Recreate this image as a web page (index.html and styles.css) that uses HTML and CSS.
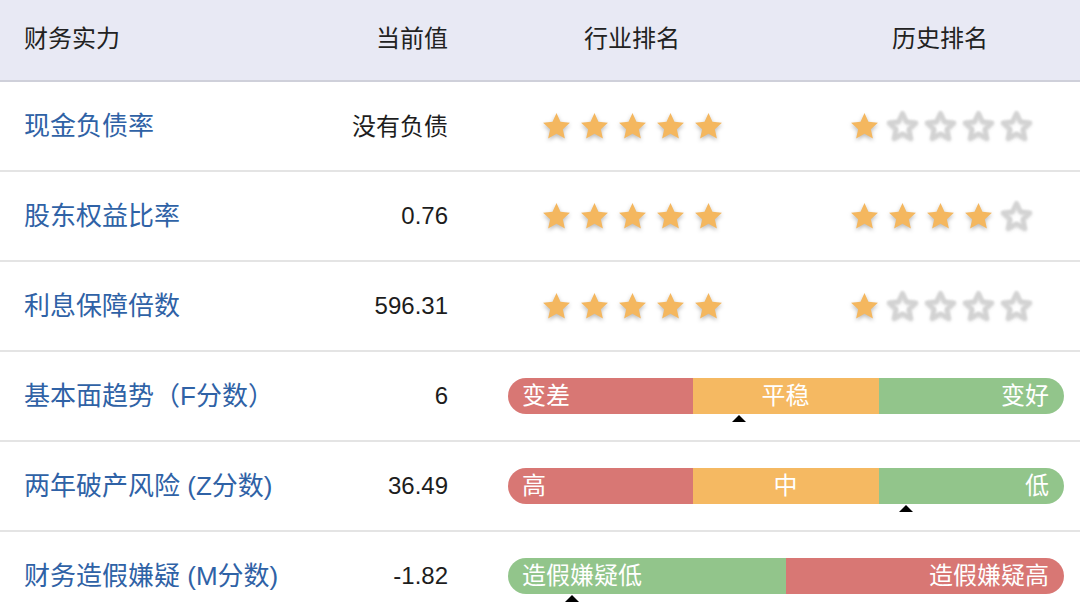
FILE: index.html
```html
<!DOCTYPE html>
<html lang="zh-CN">
<head>
<meta charset="utf-8">
<title>财务实力</title>
<link rel="stylesheet" href="styles.css">
</head>
<body>
<svg width="0" height="0" class="defs">
  <defs>
    <symbol id="star" viewBox="0 0 24 24">
      <path d="M12 1.6l3.05 6.75 7.35.75-5.5 4.95 1.6 7.25L12 17.55 5.5 21.3l1.6-7.25-5.5-4.95 7.35-.75z"/>
    </symbol>
  </defs>
</svg>
<div class="table">
  <div class="row head">
    <div class="c1">财务实力</div>
    <div class="c2">当前值</div>
    <div class="c3">行业排名</div>
    <div class="c4">历史排名</div>
  </div>

  <div class="row">
    <div class="c1 label">现金负债率</div>
    <div class="c2 val cjk">没有负债</div>
    <div class="c3 stars">
      <svg class="st on"><use href="#star"/></svg><svg class="st on"><use href="#star"/></svg><svg class="st on"><use href="#star"/></svg><svg class="st on"><use href="#star"/></svg><svg class="st on"><use href="#star"/></svg>
    </div>
    <div class="c4 stars">
      <svg class="st on"><use href="#star"/></svg><svg class="st off"><use href="#star"/></svg><svg class="st off"><use href="#star"/></svg><svg class="st off"><use href="#star"/></svg><svg class="st off"><use href="#star"/></svg>
    </div>
  </div>

  <div class="row">
    <div class="c1 label">股东权益比率</div>
    <div class="c2 val">0.76</div>
    <div class="c3 stars">
      <svg class="st on"><use href="#star"/></svg><svg class="st on"><use href="#star"/></svg><svg class="st on"><use href="#star"/></svg><svg class="st on"><use href="#star"/></svg><svg class="st on"><use href="#star"/></svg>
    </div>
    <div class="c4 stars">
      <svg class="st on"><use href="#star"/></svg><svg class="st on"><use href="#star"/></svg><svg class="st on"><use href="#star"/></svg><svg class="st on"><use href="#star"/></svg><svg class="st off"><use href="#star"/></svg>
    </div>
  </div>

  <div class="row">
    <div class="c1 label">利息保障倍数</div>
    <div class="c2 val">596.31</div>
    <div class="c3 stars">
      <svg class="st on"><use href="#star"/></svg><svg class="st on"><use href="#star"/></svg><svg class="st on"><use href="#star"/></svg><svg class="st on"><use href="#star"/></svg><svg class="st on"><use href="#star"/></svg>
    </div>
    <div class="c4 stars">
      <svg class="st on"><use href="#star"/></svg><svg class="st off"><use href="#star"/></svg><svg class="st off"><use href="#star"/></svg><svg class="st off"><use href="#star"/></svg><svg class="st off"><use href="#star"/></svg>
    </div>
  </div>

  <div class="row">
    <div class="c1 label">基本面趋势（F分数）</div>
    <div class="c2 val">6</div>
    <div class="bar three">
      <div class="seg red left">变差</div>
      <div class="seg orange center">平稳</div>
      <div class="seg green right">变好</div>
      <span class="ptr" style="left:41.5%"></span>
    </div>
  </div>

  <div class="row">
    <div class="c1 label">两年破产风险 (Z分数)</div>
    <div class="c2 val">36.49</div>
    <div class="bar three">
      <div class="seg red left">高</div>
      <div class="seg orange center">中</div>
      <div class="seg green right">低</div>
      <span class="ptr" style="left:71.6%"></span>
    </div>
  </div>

  <div class="row">
    <div class="c1 label">财务造假嫌疑 (M分数)</div>
    <div class="c2 val">-1.82</div>
    <div class="bar two">
      <div class="seg green left">造假嫌疑低</div>
      <div class="seg red right">造假嫌疑高</div>
      <span class="ptr" style="left:11.5%"></span>
    </div>
  </div>
</div>
</body>
</html>
```

FILE: styles.css
```css
html, body {
  margin: 0;
  padding: 0;
  background: #ffffff;
  overflow: hidden;
}
body {
  width: 1080px;
  height: 612px;
  font-family: "Liberation Sans", "Noto Sans CJK SC", sans-serif;
  color: #1d1d1d;
}
.defs {
  position: absolute;
  width: 0;
  height: 0;
}
.table {
  display: flex;
  flex-direction: column;
}
.row {
  display: grid;
  grid-template-columns: minmax(0, 1fr) 120px 248px 248px;
  column-gap: 60px;
  align-items: center;
  padding: 0 16px 0 24px;
  height: 88px;
  border-bottom: 2px solid #e4e4e4;
}
.row.head {
  height: 72px;
  padding-bottom: 8px;
  background: #e8e9f4;
  border-bottom: 2px solid #cfd0da;
  font-size: 24px;
  color: #222222;
}
.c1 {
  white-space: nowrap;
}
.c2 {
  text-align: right;
  white-space: nowrap;
}
.c3, .c4 {
  text-align: center;
}
.label {
  font-size: 26px;
  color: #2f62a6;
  padding-bottom: 5px;
}
.val {
  font-size: 24px;
  color: #1d1d1d;
}
.val.cjk {
  padding-bottom: 4px;
}
.stars {
  display: flex;
  justify-content: center;
  gap: 7px;
}
.st {
  width: 31px;
  height: 31px;
}
.st.on {
  fill: #f4b75f;
  filter: drop-shadow(0 2px 2px rgba(0, 0, 0, 0.28));
}
.st.off {
  fill: none;
  stroke: #d2d2d2;
  stroke-width: 3;
  stroke-linejoin: round;
  filter: blur(0.8px) drop-shadow(0 1px 1.5px rgba(0, 0, 0, 0.15));
}
.bar {
  grid-column: 3 / 5;
  position: relative;
  display: grid;
  height: 36px;
  border-radius: 18px;
  color: #ffffff;
  font-size: 24px;
  font-family: "Noto Sans CJK SC", sans-serif;
}
.bar.three {
  grid-template-columns: 1fr 1fr 1fr;
}
.bar.two {
  grid-template-columns: 1fr 1fr;
}
.seg {
  display: flex;
  align-items: center;
  padding: 0 15px 4px 14px;
  line-height: 32px;
}
.seg:first-child {
  border-radius: 18px 0 0 18px;
}
.seg:nth-last-child(2) {
  border-radius: 0 18px 18px 0;
}
.seg.left { justify-content: flex-start; }
.seg.center { justify-content: center; }
.seg.right { justify-content: flex-end; }
.red { background: #d87774; }
.orange { background: #f5b962; }
.green { background: #92c58b; }
.ptr {
  position: absolute;
  top: 37px;
  width: 0;
  height: 0;
  margin-left: -7px;
  border-left: 7px solid transparent;
  border-right: 7px solid transparent;
  border-bottom: 7px solid #000000;
}
```
